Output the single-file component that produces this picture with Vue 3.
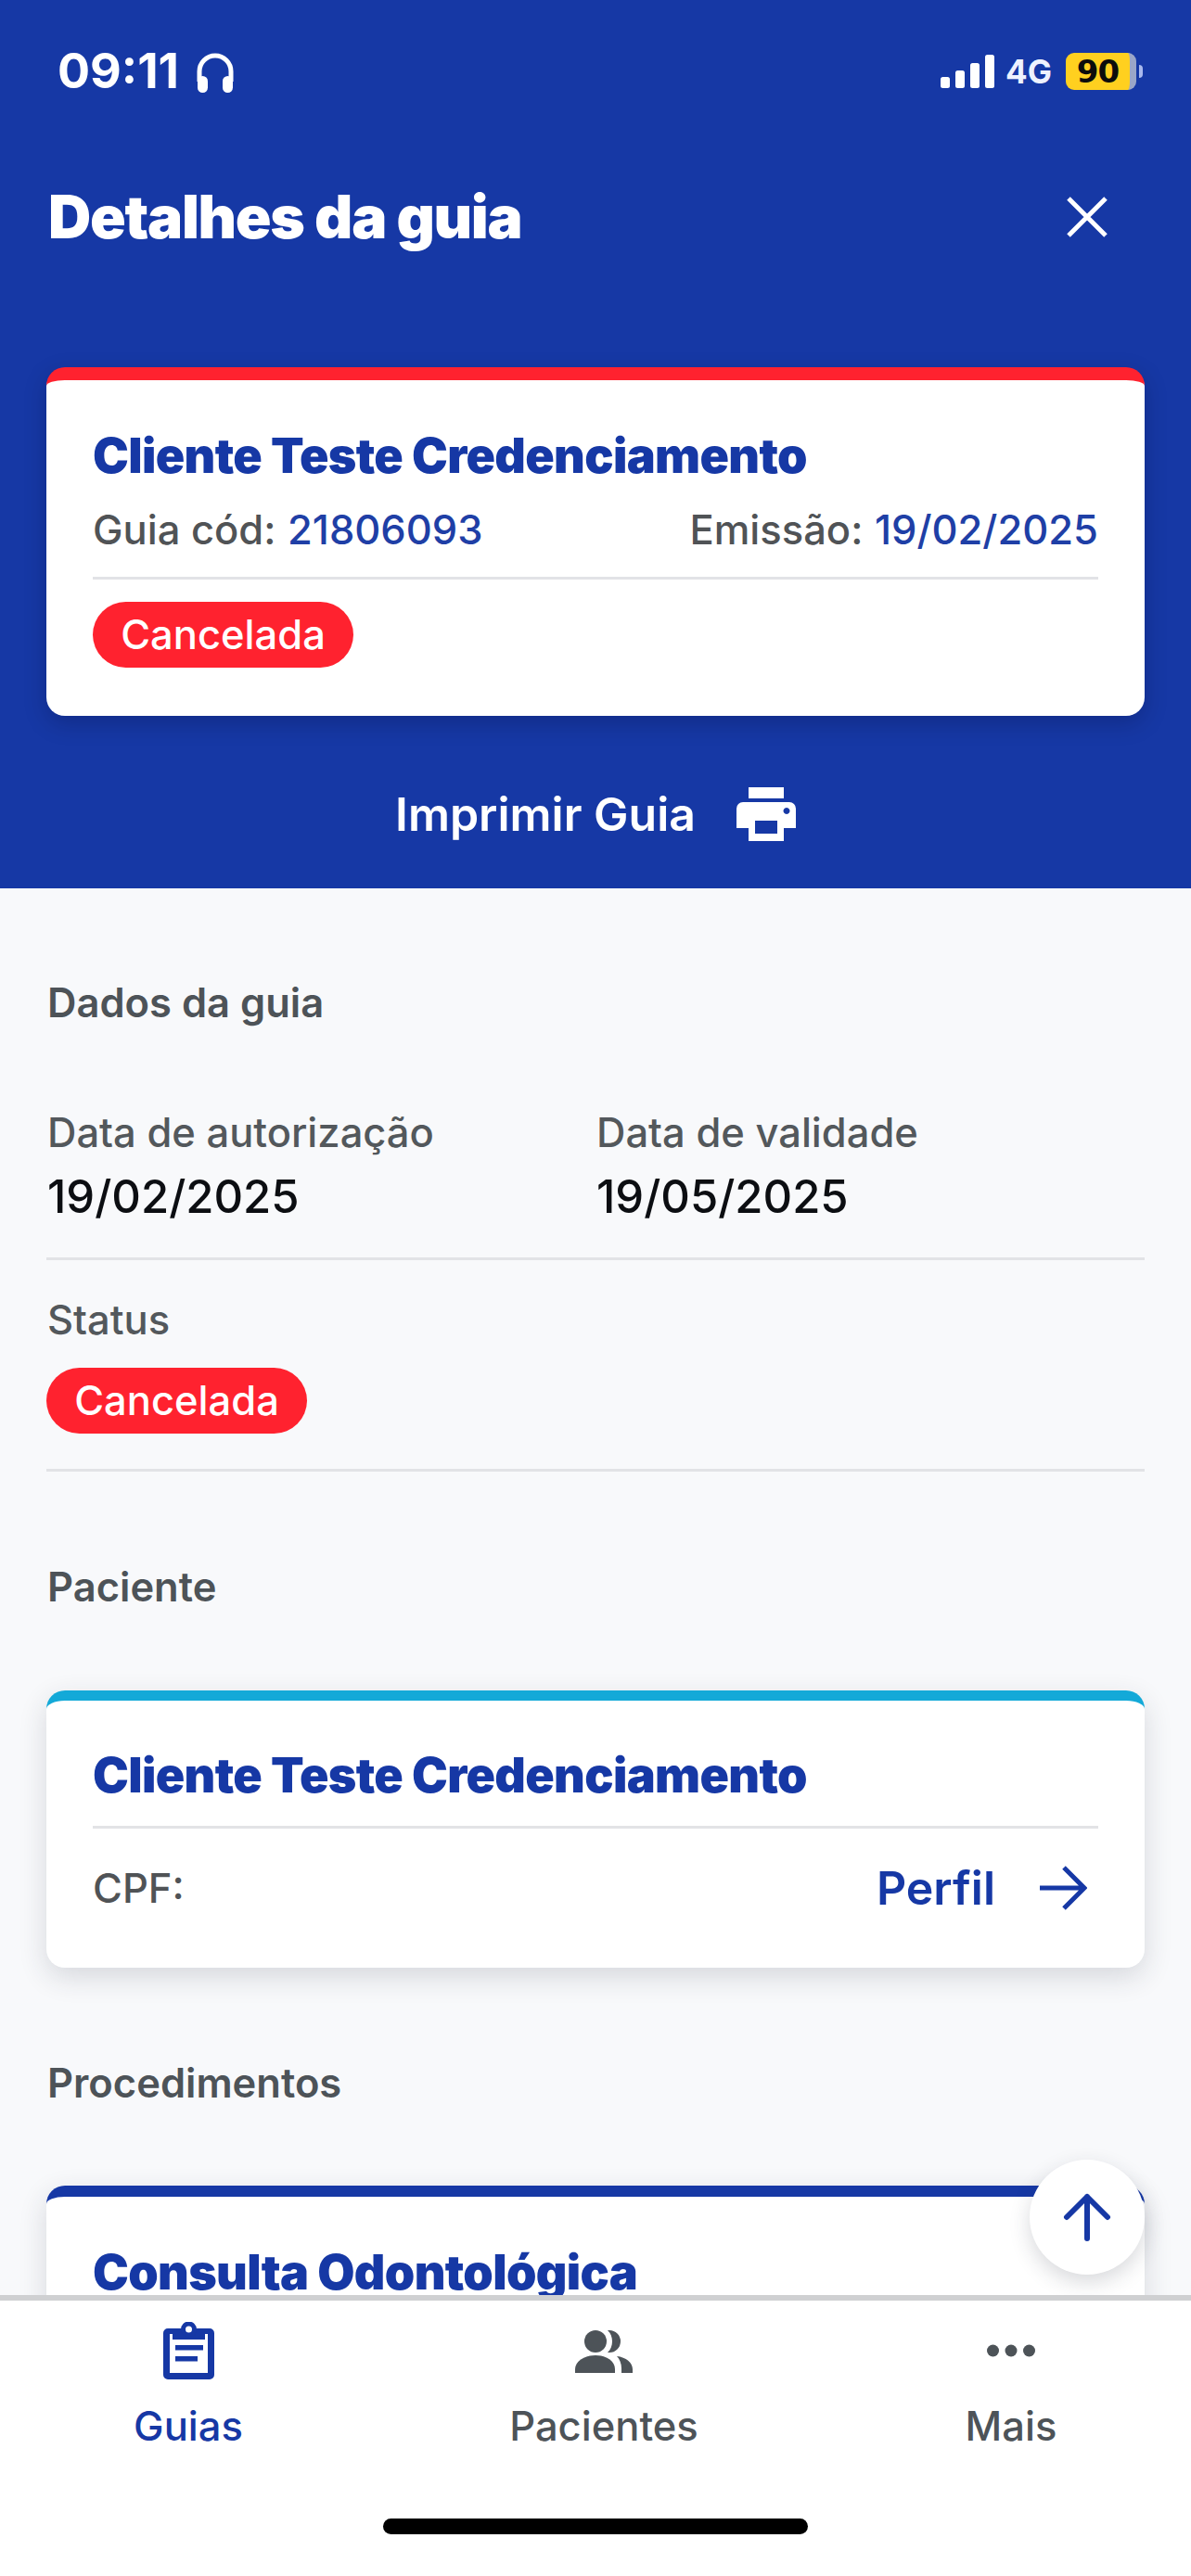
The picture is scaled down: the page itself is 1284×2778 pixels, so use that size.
<script setup>
const tabs = [
  { label: 'Guias', icon: 'guias', active: true },
  { label: 'Pacientes', icon: 'pacientes', active: false },
  { label: 'Mais', icon: 'mais', active: false },
]
</script>

<template>
  <div class="screen">
    <header class="hero">
      <div class="status">
        <div class="status-left">
          <span class="time">09:11</span>
          <svg class="headphones" viewBox="0 0 42 44" width="42" height="44">
            <path d="M4 32V21a17 17 0 0 1 34 0v11" fill="none" stroke="#fff" stroke-width="5" />
            <rect x="2" y="26" width="11" height="18" rx="5.500" fill="#fff" />
            <rect x="29" y="26" width="11" height="18" rx="5.500" fill="#fff" />
          </svg>
        </div>
        <div class="status-right">
          <svg class="signal" viewBox="0 0 58 36" width="58" height="36">
            <rect x="0" y="24" width="10" height="12" rx="2.500" fill="#fff" />
            <rect x="16" y="17" width="10" height="19" rx="2.500" fill="#fff" />
            <rect x="32" y="9" width="10" height="27" rx="2.500" fill="#fff" />
            <rect x="48" y="0" width="10" height="36" rx="2.500" fill="#fff" />
          </svg>
          <span class="net">4G</span>
          <span class="battery"><span class="battery-num">90</span></span>
          <span class="battery-cap"></span>
        </div>
      </div>

      <div class="title-row">
        <h1 class="title">Detalhes da guia</h1>
        <svg class="close" viewBox="0 0 44 44" width="44" height="44">
          <path d="M2 2L42 42M42 2L2 42" fill="none" stroke="#fff" stroke-width="5" />
        </svg>
      </div>

      <section class="card card-red">
        <div class="card-name">Cliente Teste Credenciamento</div>
        <div class="meta">
          <span>Guia cód: <b>21806093</b></span>
          <span>Emissão: <b>19/02/2025</b></span>
        </div>
        <div class="rule"></div>
        <span class="pill">Cancelada</span>
      </section>

      <div class="print">
        <span>Imprimir Guia</span>
        <svg viewBox="0 0 64 58" width="64" height="58">
          <path fill="#fff" fill-rule="evenodd" d="M13 0H51V12H13ZM7 16H57a7 7 0 0 1 7 7V44H51V58H13V44H0V23a7 7 0 0 1 7-7ZM20 36V50H44V36ZM54 22a3.500 3.500 0 1 0 .01 0Z" />
        </svg>
      </div>
    </header>

    <main class="content">
      <h2 class="section section-first">Dados da guia</h2>
      <div class="dates">
        <div>
          <div class="label">Data de autorização</div>
          <div class="value">19/02/2025</div>
        </div>
        <div>
          <div class="label">Data de validade</div>
          <div class="value">19/05/2025</div>
        </div>
      </div>
      <div class="rule rule-page"></div>
      <div class="label status-label">Status</div>
      <span class="pill pill-page">Cancelada</span>
      <div class="rule rule-page rule-status"></div>

      <h2 class="section section-patient">Paciente</h2>
      <section class="card card-teal">
        <div class="card-name">Cliente Teste Credenciamento</div>
        <div class="rule rule-patient"></div>
        <div class="patient-row">
          <span class="cpf">CPF:</span>
          <span class="profile">
            Perfil
            <svg viewBox="0 0 52 48" width="52" height="48">
              <path d="M1 24H48M27 2L49 24L27 46" fill="none" stroke="#1638a5" stroke-width="5" />
            </svg>
          </span>
        </div>
      </section>

      <h2 class="section section-proc">Procedimentos</h2>
      <section class="card card-blue">
        <div class="card-name">Consulta Odontológica</div>
      </section>

      <button class="fab" type="button" aria-label="Voltar ao topo">
        <svg viewBox="0 0 52 52" width="52" height="52">
          <path d="M26 49V4M4 26L26 4L48 26" fill="none" stroke="#1638a5" stroke-width="6" stroke-linecap="round" stroke-linejoin="round" />
        </svg>
      </button>
    </main>

    <nav class="tabbar">
      <div class="tabs">
        <div v-for="tab in tabs" :key="tab.label" class="tab" :class="[`tab-${tab.icon}`, { active: tab.active }]">
          <svg v-if="tab.icon === 'guias'" viewBox="0 0 55 62" width="55" height="62">
            <path fill="#1638a5" fill-rule="evenodd" d="M5 7H50a5 5 0 0 1 5 5V57a5 5 0 0 1-5 5H5a5 5 0 0 1-5-5V12a5 5 0 0 1 5-5ZM7 13V55H48V13H45V19H10V13Z" />
            <circle cx="27.500" cy="8" r="6" fill="#fff" stroke="#1638a5" stroke-width="5" />
            <rect x="13" y="25" width="30" height="5.500" fill="#1638a5" />
            <rect x="13" y="37" width="24" height="5.500" fill="#1638a5" />
          </svg>
          <svg v-else-if="tab.icon === 'pacientes'" viewBox="0 0 62 46" width="62" height="46">
            <circle cx="22" cy="12" r="12" fill="#4d5358" />
            <path fill="#4d5358" d="M35 0H37a12 12 0 0 1 0 24H35c3.500-3 5-7.500 5-12S38.500 3 35 0Z" />
            <path fill="#4d5358" d="M0 46V42C0 34 9 27 22 27S43 34 43 42V46Z" />
            <path fill="#4d5358" d="M45 28C55 29 62 35 62 42V46H50V41C50 36 48 31 45 28Z" />
          </svg>
          <svg v-else viewBox="0 0 52 14" width="52" height="14">
            <circle cx="6.500" cy="7" r="6.500" fill="#4d5358" />
            <circle cx="26" cy="7" r="6.500" fill="#4d5358" />
            <circle cx="45.500" cy="7" r="6.500" fill="#4d5358" />
          </svg>
          <span class="tab-label">{{ tab.label }}</span>
        </div>
      </div>
      <div class="home-bar"></div>
    </nav>
  </div>
</template>

<style scoped>
.screen {
  width: 1284px;
  height: 2778px;
  display: flex;
  flex-direction: column;
  overflow: hidden;
  background: #f8f9fb;
  font-family: Inter, "Liberation Sans", sans-serif;
  color: #4d5358;
}
.hero {
  height: 958px;
  flex: none;
  box-sizing: border-box;
  padding: 55px 50px 0;
  background: #1638a5;
  color: #fff;
}
.status {
  height: 44px;
  display: flex;
  justify-content: space-between;
  align-items: center;
  padding: 0 0 0 12px;
}
.status-left { display: flex; align-items: center; gap: 18px; }
.time { font-size: 52px; font-weight: 700; line-height: 44px; }
.headphones { margin-top: 2px; }
.status-right { display: flex; align-items: center; }
.signal { margin-right: 12px; }
.net { font-size: 35px; font-weight: 700; margin-right: 15px; color: #eef2ff; }
.battery {
  width: 76px;
  height: 40px;
  box-sizing: border-box;
  background: #ffd01f;
  border-right: 7px solid #9aa6c8;
  border-radius: 9px;
  display: flex;
  align-items: center;
  justify-content: center;
}
.battery-num { font-size: 34px; font-weight: 900; color: #0c0c0c; font-family: "DejaVu Sans", sans-serif; letter-spacing: -1px; }
.battery-cap {
  width: 4px;
  height: 14px;
  margin: 0 2px 0 3px;
  background: #a9b9ee;
  border-radius: 0 4px 4px 0;
}
.title-row {
  display: flex;
  justify-content: space-between;
  align-items: center;
  margin-top: 103px;
  padding: 0 40px 0 2px;
  height: 64px;
}
.title {
  margin: 0;
  font-size: 64px;
  line-height: 64px;
  font-weight: 900;
  letter-spacing: -1.300px;
}
.card {
  position: relative;
  box-sizing: border-box;
  background: #fff;
  border-radius: 20px;
  padding: 0 50px;
  overflow: hidden;
  border-top: 14px solid;
}
.card-red {
  height: 376px;
  margin-top: 130px;
  padding-top: 52px;
  border-top-color: #ff222f;
  box-shadow: 0 8px 24px rgba(0, 0, 30, 0.22);
  color: #4d5358;
}
.card-name {
  color: #1638a5;
  font-size: 52px;
  line-height: 60px;
  font-weight: 900;
  letter-spacing: -0.650px;
}
.meta {
  display: flex;
  justify-content: space-between;
  margin-top: 23px;
  font-size: 43.500px;
  line-height: 52px;
  font-weight: 500;
  color: #505356;
}
.meta b { font-weight: 500; color: #1f3fa6; margin-left: 1px; }
.rule { height: 3px; background: #e2e3e6; }
.card-red .rule { margin-top: 25px; }
.pill {
  display: inline-block;
  box-sizing: border-box;
  height: 71px;
  width: 281px;
  border-radius: 36px;
  background: #ff222f;
  color: #fff;
  text-align: center;
  font-size: 43.500px;
  line-height: 71px;
  font-weight: 500;
}
.card-red .pill { margin-top: 24px; }
.print {
  display: flex;
  justify-content: center;
  align-items: center;
  gap: 44px;
  margin-top: 77px;
  font-size: 50px;
  line-height: 58px;
  font-weight: 600;
}
.content {
  position: relative;
  flex: 1;
  min-height: 0;
  overflow: hidden;
  padding: 0 50px;
}
.section {
  margin: 0;
  font-size: 43.500px;
  line-height: 52px;
  font-weight: 600;
  color: #4d5358;
  padding-left: 1px;
}
.section-first { margin-top: 97px; }
.dates {
  display: grid;
  grid-template-columns: 592px 1fr;
  margin-top: 88px;
  padding-left: 1px;
}
.label { font-size: 43.500px; line-height: 52px; font-weight: 500; color: #53585c; }
.value { margin-top: 14px; font-size: 49px; line-height: 60px; font-weight: 500; color: #0c0e12; }
.rule-page { margin-top: 35px; }
.status-label { margin-top: 38px; padding-left: 1px; }
.pill-page { display: block; margin-top: 26px; }
.rule-status { margin-top: 38px; }
.section-patient { margin-top: 98px; }
.card-teal {
  height: 299px;
  margin-top: 86px;
  padding-top: 51px;
  border-top: 11px solid #13a9d8;
  box-shadow: 0 10px 30px rgba(40, 45, 60, 0.16);
  overflow: visible;
}
.rule-patient { margin-top: 24px; }
.patient-row {
  display: flex;
  justify-content: space-between;
  align-items: center;
  margin-top: 38px;
  padding-right: 12px;
}
.cpf { font-size: 43.500px; line-height: 52px; font-weight: 500; color: #505356; }
.profile {
  display: flex;
  align-items: center;
  gap: 47px;
  font-size: 50px;
  line-height: 52px;
  font-weight: 600;
  color: #1638a5;
}
.section-proc { margin-top: 98px; }
.card-blue {
  height: 300px;
  margin-top: 85px;
  padding-top: 52px;
  border-top: 12px solid #1638a5;
  box-shadow: 0 10px 30px rgba(40, 45, 60, 0.16);
  overflow: visible;
}
.fab {
  position: absolute;
  right: 50px;
  top: 1371px;
  width: 124px;
  height: 124px;
  border: 0;
  padding: 0;
  border-radius: 50%;
  background: #fff;
  box-shadow: 0 8px 22px rgba(40, 45, 60, 0.18);
  display: flex;
  align-items: center;
  justify-content: center;
}
.tabbar {
  position: relative;
  flex: none;
  height: 303px;
  box-sizing: border-box;
  background: #fff;
  border-top: 6px solid #cfd0d2;
  display: flex;
  flex-direction: column;
}
.tabs {
  display: grid;
  grid-template-columns: 406px 490px 1fr;
  padding-top: 23px;
}
.tab {
  height: 137px;
  display: flex;
  flex-direction: column;
  align-items: center;
  justify-content: space-between;
  color: #4d5358;
}
.tab-mais svg { margin-top: 24px; }
.tab-pacientes svg { margin-top: 9px; }
.tab.active { color: #1638a5; }
.tab-label { font-size: 43.500px; line-height: 50px; font-weight: 500; }
.home-bar {
  align-self: center;
  width: 458px;
  height: 17px;
  margin-top: 75px;
  border-radius: 9px;
  background: #000;
}
</style>

<style>
html, body { margin: 0; background: #f8f9fb; }
</style>
